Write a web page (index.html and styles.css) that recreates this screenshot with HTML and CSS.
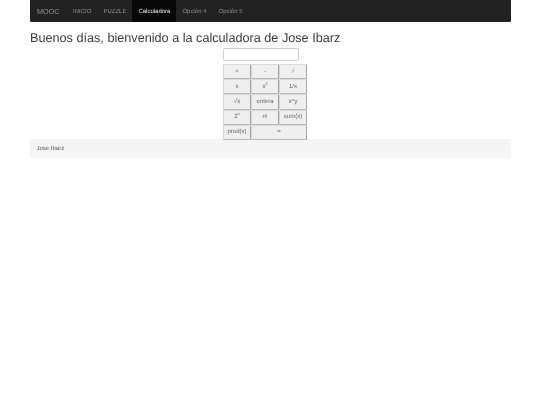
FILE: index.html
```html
<!DOCTYPE html>
<html lang="es">
<head>
<meta charset="utf-8">
<title>Calculadora</title>
<link rel="stylesheet" href="styles.css">
</head>
<body>
<div class="container">
  <nav class="navbar">
    <a class="brand" href="#">MOOC</a>
    <a class="link" href="#">INICIO</a>
    <a class="link" href="#">PUZZLE</a>
    <a class="link active" href="#">Calculadora</a>
    <a class="link" href="#">Opción 4</a>
    <a class="link" href="#">Opción 5</a>
  </nav>
  <h1 class="title">Buenos días, bienvenido a la calculadora de Jose Ibarz</h1>
  <main class="calc">
    <input class="display" type="text">
    <div class="keys">
      <button class="key">+</button><button class="key">-</button><button class="key">/</button>
      <button class="key">x</button><button class="key">x<sup>2</sup></button><button class="key">1/x</button>
      <button class="key">√x</button><button class="key">entera</button><button class="key">x^y</button>
      <button class="key">2<sup>n</sup></button><button class="key">n!</button><button class="key">sum(x)</button>
      <button class="key">prod(x)</button><button class="key wide">=</button>
    </div>
  </main>
  <footer class="footer">Jose Ibarz</footer>
</div>
</body>
</html>
```
FILE: styles.css
```css
html, body {
  margin: 0;
  padding: 0;
  background: #fff;
}
body {
  font-family: "Liberation Sans", Arial, sans-serif;
  color: #333;
  font-size: 6px;
  text-rendering: geometricPrecision;
}
.container {
  width: 481px;
  margin-left: 29.5px;
  will-change: transform;
}
.navbar {
  display: flex;
  height: 22px;
  background: #222;
  border-radius: 0 0 1.5px 1.5px;
  box-sizing: border-box;
}
.navbar a {
  display: flex;
  align-items: center;
  box-sizing: border-box;
  text-decoration: none;
  color: #8f8f8f;
}
.navbar .brand {
  font-size: 7.25px;
  padding: 0 7.5px 0 7px;
}
.navbar .link {
  padding: 1.4px 6px 0;
}
.navbar .active {
  background: #080808;
  color: #e8e8e8;
}
.title {
  font-weight: 400;
  font-size: 12.66px;
  line-height: 15px;
  margin: 9px 0 2px;
  color: #3a3a3a;
  white-space: nowrap;
}
.calc {
  display: flex;
  flex-direction: column;
  align-items: flex-start;
  margin-left: 193px;
  width: 84px;
}
.display {
  width: 76px;
  height: 13px;
  box-sizing: border-box;
  margin: 0 0 3px;
  padding: 0;
  background: #fff;
  border: 1px solid #cfcfcf;
  border-radius: 1.5px;
}
.keys {
  display: grid;
  grid-template-columns: 28px 28px 28px;
  grid-auto-rows: 15.2px;
  width: 84px;
}
.key {
  margin: 0;
  padding: 0;
  font-family: inherit;
  font-size: 6px;
  text-rendering: geometricPrecision;
  color: #666;
  background: #efefef;
  border: 1px solid;
  border-color: #dadada #a4a4a4 #b8b8b8 #d4d4d4;
  border-radius: 1px;
  box-sizing: border-box;
}
.key sup {
  font-size: 4px;
  line-height: 0;
}
.wide {
  grid-column: span 2;
}
.footer {
  background: #f5f5f5;
  height: 18.5px;
  display: flex;
  align-items: center;
  padding-left: 6.5px;
  color: #555;
  margin-top: -0.5px;
  padding-top: 1px;
  box-sizing: border-box;
}
```
